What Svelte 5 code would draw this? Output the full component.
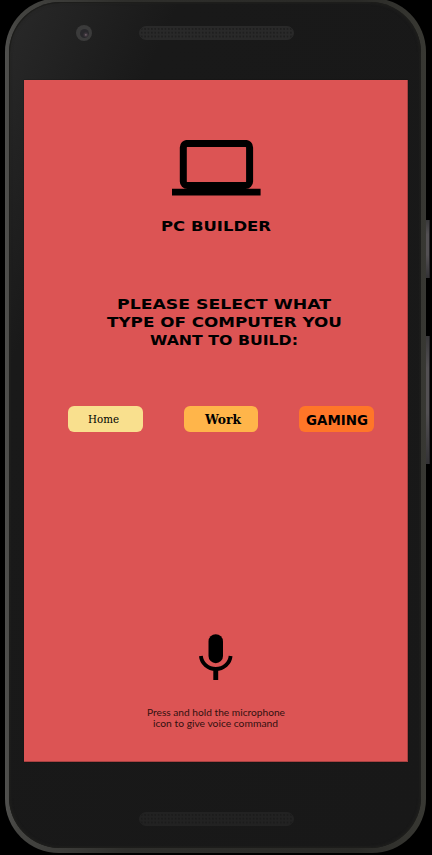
<script>
  const prompt = [
    { text: 'PLEASE SELECT WHAT', width: 214 },
    { text: 'TYPE OF COMPUTER YOU', width: 235 },
    { text: 'WANT TO BUILD:', width: 148 }
  ];
  const hint = [
    { text: 'Press and hold the microphone', width: 138 },
    { text: 'icon to give voice command', width: 125 }
  ];
  const choices = [
    { text: 'Home', kind: 'home', width: 31 },
    { text: 'Work', kind: 'work', width: 36 },
    { text: 'GAMING', kind: 'gaming', width: 62 }
  ];
</script>

{#snippet line(text, width, height, baseline)}
  <svg class="line" {width} {height}>
    <text x="0" y={baseline} textLength={width} lengthAdjust="spacingAndGlyphs">{text}</text>
  </svg>
{/snippet}

<div class="stage">
  <div class="key power"></div>
  <div class="key volume"></div>
  <div class="phone">
    <div class="body">
      <header>
        <div class="camera"><i></i></div>
        <div class="speaker"></div>
      </header>
      <main>
        <svg class="laptop" width="90" height="56" viewBox="0 0 90 56">
          <rect x="11.3" y="3.4" width="66.3" height="42" rx="4" fill="none" stroke="#000" stroke-width="7" />
          <path d="M0 48.7h88.6v6.8H0z" />
        </svg>
        <h1>{@render line('PC BUILDER', 110, 18, 14)}</h1>
        <h2>
          {#each prompt as row}
            {@render line(row.text, row.width, 18, 14)}
          {/each}
        </h2>
        <nav>
          {#each choices as c}
            <button class={c.kind}>{@render line(c.text, c.width, 20, c.kind === 'home' ? 14 : c.kind === 'work' ? 14.5 : 15.5)}</button>
          {/each}
        </nav>
        <svg class="mic" width="34" height="47" viewBox="0 0 34 47">
          <rect x="9.5" y=".2" width="14.5" height="29" rx="7.25" />
          <path d="M1.9 22a14.9 14.1 0 0 0 29.7 0" fill="none" stroke="#000" stroke-width="3.8" />
          <path d="M14.3 36h4.9v10h-4.9z" />
        </svg>
        <div class="hint">
          {#each hint as row}
            {@render line(row.text, row.width, 11.5, 9)}
          {/each}
        </div>
      </main>
      <footer><div class="speaker dim"></div></footer>
    </div>
  </div>
</div>

<style>
  :global(body) { margin: 0; background: #000; }
  .stage {
    position: relative;
    width: 432px;
    height: 855px;
    overflow: hidden;
    background: #000;
  }
  .phone {
    box-sizing: border-box;
    width: 421px;
    height: 855px;
    margin: -2px 0 0 5px;
    padding: 4px 5px 5px 4px;
    border-radius: 54px;
    background: linear-gradient(90deg, #50504e 0, #444441 12px, #2e2e2b 120px, #292926 350px, #383833 100%);
  }
  .body {
    box-sizing: border-box;
    height: 846px;
    padding: 0 13.5px 0 15px;
    border-radius: 51px;
    background: linear-gradient(115deg, #292929 0, #191919 155px, #181818 100%);
    box-shadow: inset 0 0 0 1px #1d1d1b, inset 0 0 3px 1px #222220;
  }
  header {
    display: flex;
    align-items: flex-start;
    box-sizing: border-box;
    height: 78px;
    padding: 23px 0 0 52px;
  }
  .camera {
    display: flex;
    align-items: center;
    justify-content: center;
    width: 16px;
    height: 16px;
    border-radius: 50%;
    background: #3b3b3b;
  }
  .camera i {
    width: 9px;
    height: 9px;
    border-radius: 50%;
    background: radial-gradient(circle at 65% 65%, #807078 0, #40373f 1.2px, #28272b 3px);
  }
  .speaker {
    box-sizing: border-box;
    width: 155px;
    height: 14px;
    margin: 0 0 0 47px;
    border: 1px solid #292929;
    border-radius: 7px;
    background: radial-gradient(circle, #1e1e1e 0.6px, #292929 1.3px) 0 0 / 3.4px 3.8px;
  }
  header .speaker { margin-top: 1px; }
  main {
    display: flex;
    flex-direction: column;
    align-items: center;
    box-sizing: border-box;
    height: 682px;
    width: 383.5px;
    padding-top: 60px;
    background: #dc5454;
    box-shadow: inset -1px -1px #a84141, 0 0 1px #151010;
  }
  svg { display: block; flex: none; }
  h1, h2 {
    margin: 0;
    font: bold 14px "DejaVu Sans", sans-serif;
  }
  .laptop { margin-left: 3px; }
  h1 { margin: 21px 0 0 1px; }
  h2 {
    display: flex;
    flex-direction: column;
    align-items: center;
    margin: 59.5px 0 0 17px;
    height: 54px;
  }
  nav {
    display: flex;
    align-self: flex-start;
    gap: 41px;
    margin: 57.5px 0 0 43.8px;
  }
  button {
    display: flex;
    align-items: center;
    justify-content: center;
    box-sizing: border-box;
    width: 74.8px;
    height: 26px;
    padding: 0;
    border: 0;
    border-radius: 6px;
    color: #000;
  }
  .home {
    padding-right: 3px;
    background: #f9e08e;
    font: 11px "DejaVu Serif", serif;
  }
  .work {
    padding-left: 3.5px;
    background: #ffb54a;
    font: bold 12px "DejaVu Serif", serif;
  }
  .gaming {
    background: #ff7628;
    font: bold 14px "DejaVu Sans", sans-serif;
  }
  .mic { margin-top: 202px; }
  .hint {
    display: flex;
    flex-direction: column;
    align-items: center;
    margin-top: 25.5px;
    font: 10px Lato, sans-serif;
    fill: #32100f;
  }
  .line { overflow: visible; }
  footer {
    padding: 49.5px 0 0 68px;
  }
  .dim {
    border-color: #222;
    background: radial-gradient(circle, #1b1b1b 0.6px, #222 1.3px) 0 0 / 3.4px 3.8px;
  }
  .key {
    position: absolute;
    left: 426px;
    box-sizing: border-box;
    width: 4px;
    border-right: 1px solid #252427;
    background: linear-gradient(#39383a, #535053 25%, #535053 60%, #333235);
  }
  .power { top: 220px; height: 58px; }
  .volume { top: 336px; height: 128px; }
</style>
